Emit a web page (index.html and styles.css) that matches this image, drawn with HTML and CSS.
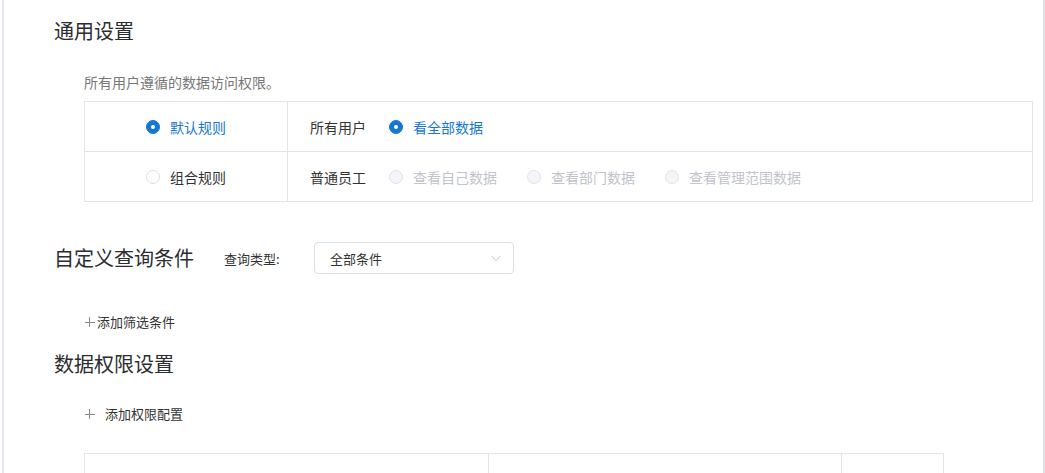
FILE: index.html
```html
<!DOCTYPE html>
<html lang="zh-CN">
<head>
  <meta charset="UTF-8">
  <title>数据权限</title>
  <link rel="stylesheet" href="styles.css">
</head>
<body>
  <div class="page">
    <!-- 通用设置 -->
    <section class="general">
      <h2 class="section-title">通用设置</h2>
      <p class="desc">所有用户遵循的数据访问权限。</p>
      <div class="rules">
        <div class="rule-cell rule-name">
          <span class="radio checked"></span>
          <span class="radio-label active">默认规则</span>
        </div>
        <div class="rule-cell rule-body">
          <span class="who">所有用户</span>
          <span class="option">
            <span class="radio checked"></span>
            <span class="radio-label active">看全部数据</span>
          </span>
        </div>
        <div class="rule-cell rule-name">
          <span class="radio"></span>
          <span class="radio-label">组合规则</span>
        </div>
        <div class="rule-cell rule-body">
          <span class="who">普通员工</span>
          <span class="option">
            <span class="radio disabled"></span>
            <span class="radio-label muted">查看自己数据</span>
          </span>
          <span class="option">
            <span class="radio disabled"></span>
            <span class="radio-label muted">查看部门数据</span>
          </span>
          <span class="option">
            <span class="radio disabled"></span>
            <span class="radio-label muted">查看管理范围数据</span>
          </span>
        </div>
      </div>
    </section>

    <!-- 自定义查询条件 -->
    <section class="query">
      <div class="query-head">
        <h2 class="section-title">自定义查询条件</h2>
        <span class="field-label">查询类型:</span>
        <div class="select">
          <span>全部条件</span>
          <svg class="arrow" width="12" height="12" viewBox="0 0 12 12">
            <path d="M1.5 4 L6 8.5 L10.5 4" fill="none" stroke="#c0c4cc" stroke-width="1"/>
          </svg>
        </div>
      </div>
      <a class="add-link filter">
        <span class="plus"></span>添加筛选条件
      </a>
    </section>

    <!-- 数据权限设置 -->
    <section class="perm">
      <h2 class="section-title">数据权限设置</h2>
      <a class="add-link config">
        <span class="plus"></span>添加权限配置
      </a>
      <div class="perm-table">
        <div class="perm-col"></div>
        <div class="perm-col"></div>
        <div class="perm-col"></div>
      </div>
    </section>
  </div>
</body>
</html>
```

FILE: styles.css
```css
html, body {
  margin: 0;
  height: 100%;
  overflow: hidden;
}

body {
  font-family: "Noto Sans CJK SC", "Noto Sans", sans-serif;
  color: #333;
  background: #fff;
}

.page {
  margin-left: 2px;
  border-left: 2px solid #e3e7ee;
  border-right: 2px solid #dfe3ea;
  min-height: 100%;
  padding: 17px 10px 0 50px;
  box-sizing: border-box;
}

.section-title {
  margin: 0;
  font-size: 20px;
  line-height: 28px;
  font-weight: normal;
  color: #2b2d30;
}

/* 通用设置 */
.desc {
  margin: 27px 0 0 30px;
  font-size: 14px;
  line-height: 20px;
  color: #777;
}

.rules {
  margin: 9px 0 0 30px;
  display: grid;
  grid-template-columns: 203px 1fr;
  grid-auto-rows: 50px;
  border: 1px solid #e2e4e8;
  border-bottom: 0;
}

.rule-cell {
  display: flex;
  align-items: center;
  border-bottom: 1px solid #e2e4e8;
  font-size: 14px;
}

.rule-name {
  justify-content: center;
  border-right: 1px solid #e2e4e8;
}

.rule-body {
  padding-left: 22px;
  gap: 30px;
}

.who {
  color: #333;
  margin-right: -7px;
}

.option {
  display: flex;
  align-items: center;
}

.radio {
  width: 14px;
  height: 14px;
  border-radius: 50%;
  border: 1px solid #dcdfe6;
  background: #fff;
  box-sizing: border-box;
  position: relative;
  margin-right: 10px;
  flex-shrink: 0;
}

.radio.checked {
  background: #1677d2;
  border-color: #1677d2;
}

.radio.checked::after {
  content: "";
  position: absolute;
  left: 50%;
  top: 50%;
  width: 4px;
  height: 4px;
  margin: -2px 0 0 -2px;
  border-radius: 50%;
  background: #fff;
}

.radio.disabled {
  background: #f3f5f9;
  border-color: #dfe3ea;
}

.radio-label {
  color: #333;
}

.radio-label.active {
  color: #1677d2;
}

.radio-label.muted {
  color: #c0c4cc;
}

/* 自定义查询条件 */
.query-head {
  margin-top: 40px;
  display: flex;
  align-items: center;
}

.field-label {
  margin-left: 30px;
  width: 90px;
  font-size: 13px;
  color: #333;
}

.select {
  width: 200px;
  height: 32px;
  box-sizing: border-box;
  border: 1px solid #dcdfe6;
  border-radius: 4px;
  display: flex;
  align-items: center;
  justify-content: space-between;
  padding: 0 11px 0 15px;
  font-size: 13px;
  color: #333;
}

.add-link {
  display: flex;
  align-items: center;
  margin-left: 31px;
  font-size: 13px;
  line-height: 20px;
  color: #333;
  cursor: pointer;
}

.add-link .plus {
  width: 10px;
  height: 10px;
  position: relative;
  margin-right: 2px;
}

.add-link .plus::before,
.add-link .plus::after {
  content: "";
  position: absolute;
  background: #888;
}

.add-link .plus::before {
  left: 0;
  right: 0;
  top: 5px;
  height: 1px;
}

.add-link .plus::after {
  top: 0;
  bottom: 0;
  left: 4px;
  width: 1px;
}

.add-link.filter {
  margin-top: 38px;
}

/* 数据权限设置 */
.perm {
  margin-top: 18px;
}

.add-link.config {
  margin-top: 26px;
}

.add-link.config .plus {
  margin-right: 10px;
}

.perm-table {
  margin: 29px 0 0 30px;
  width: 860px;
  height: 60px;
  display: grid;
  grid-template-columns: 403px 353px 1fr;
  border: 1px solid #e2e4e8;
  border-bottom: 0;
  box-sizing: border-box;
}

.perm-col + .perm-col {
  border-left: 1px solid #e2e4e8;
}
```
